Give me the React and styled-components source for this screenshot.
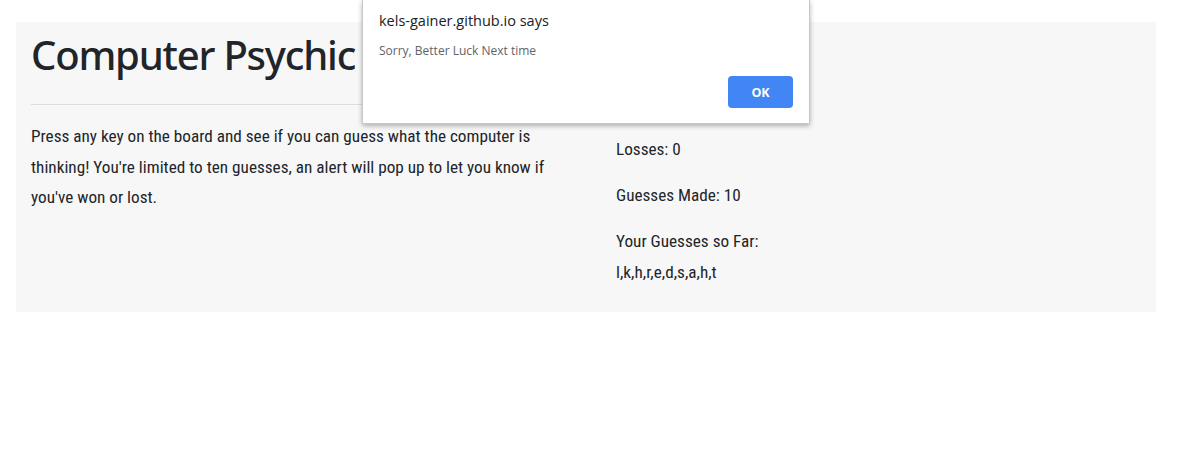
import React from "react";
import styled, { createGlobalStyle } from "styled-components";

const Global = createGlobalStyle`
  html, body { margin: 0; padding: 0; background: #fff; }
  body { font-family: Roboto, "Liberation Sans", sans-serif; font-stretch: condensed; color: #212529; }
  * { box-sizing: border-box; }
`;

const Page = styled.div`
  position: relative;
  width: 1178px;
  height: 461px;
  padding: 22px 0 0 16px;
`;

const Panel = styled.main`
  width: 1140px;
  height: 290px;
  background: #f7f7f7;
  padding: 9px 15px 0 15px;
  display: grid;
  grid-template-columns: 540px 1fr;
  column-gap: 45px;
`;

const Column = styled.section`
  display: flex;
  flex-direction: column;
`;

const Title = styled.h1`
  margin: 0;
  font-family: "Noto Sans", "Open Sans", sans-serif;
  font-stretch: normal;
  font-weight: 500;
  font-size: 40px;
  line-height: 48px;
  color: #212529;
  letter-spacing: -1.2px;
`;

const Rule = styled.hr`
  margin: 25px 0 16px;
  border: 0;
  border-top: 1px solid #dcdcdc;
`;

const Text = styled.p`
  margin: ${(p) => p.$gap ?? "0 0 15.5px"};
  font-family: Roboto, "Liberation Sans", sans-serif;
  font-stretch: condensed;
  font-size: 17.2px;
  line-height: 30.5px;
  color: #212529;
`;

const Dialog = styled.div`
  position: absolute;
  top: 0;
  left: 362px;
  width: 448px;
  height: 124px;
  background: #fff;
  border: 1px solid #c8c8c8;
  border-top: 0;
  border-radius: 0 0 2px 2px;
  box-shadow: 0 2px 5px rgba(0, 0, 0, 0.3);
  padding: 11px 16px 0 16px;
  font-family: "Open Sans", "Noto Sans", sans-serif;
  font-stretch: normal;
  display: flex;
  flex-direction: column;
`;

const DialogTitle = styled.div`
  font-size: 14.5px;
  line-height: 20px;
  color: #202124;
`;

const DialogMessage = styled.div`
  margin-top: 12px;
  font-size: 12px;
  line-height: 16px;
  color: #5f6368;
`;

const Actions = styled.div`
  display: flex;
  justify-content: flex-end;
  margin-top: 17px;
`;

const OkButton = styled.button`
  width: 65px;
  height: 32px;
  border: 0;
  border-radius: 4px;
  background: #4285f4;
  color: #fff;
  font-family: "Open Sans", "Noto Sans", sans-serif;
  font-weight: 700;
  font-size: 12.5px;
  cursor: pointer;
`;

export default function App() {
  return (
    <>
      <Global />
      <Page>
        <Panel>
          <Column>
            <Title>Computer Psychic</Title>
            <Rule />
            <Text>
              Press any key on the board and see if you can guess what the computer is thinking! You're limited to ten guesses, an alert will pop up to let you know if you've won or lost.
            </Text>
          </Column>
          <Column>
            <Text $gap="57px 0 15.5px">Wins: 0</Text>
            <Text>Losses: 0</Text>
            <Text>Guesses Made: 10</Text>
            <Text $gap="0">Your Guesses so Far:</Text>
            <Text $gap="0">l,k,h,r,e,d,s,a,h,t</Text>
          </Column>
        </Panel>
        <Dialog>
          <DialogTitle>kels-gainer.github.io says</DialogTitle>
          <DialogMessage>Sorry, Better Luck Next time</DialogMessage>
          <Actions>
            <OkButton>OK</OkButton>
          </Actions>
        </Dialog>
      </Page>
    </>
  );
}
